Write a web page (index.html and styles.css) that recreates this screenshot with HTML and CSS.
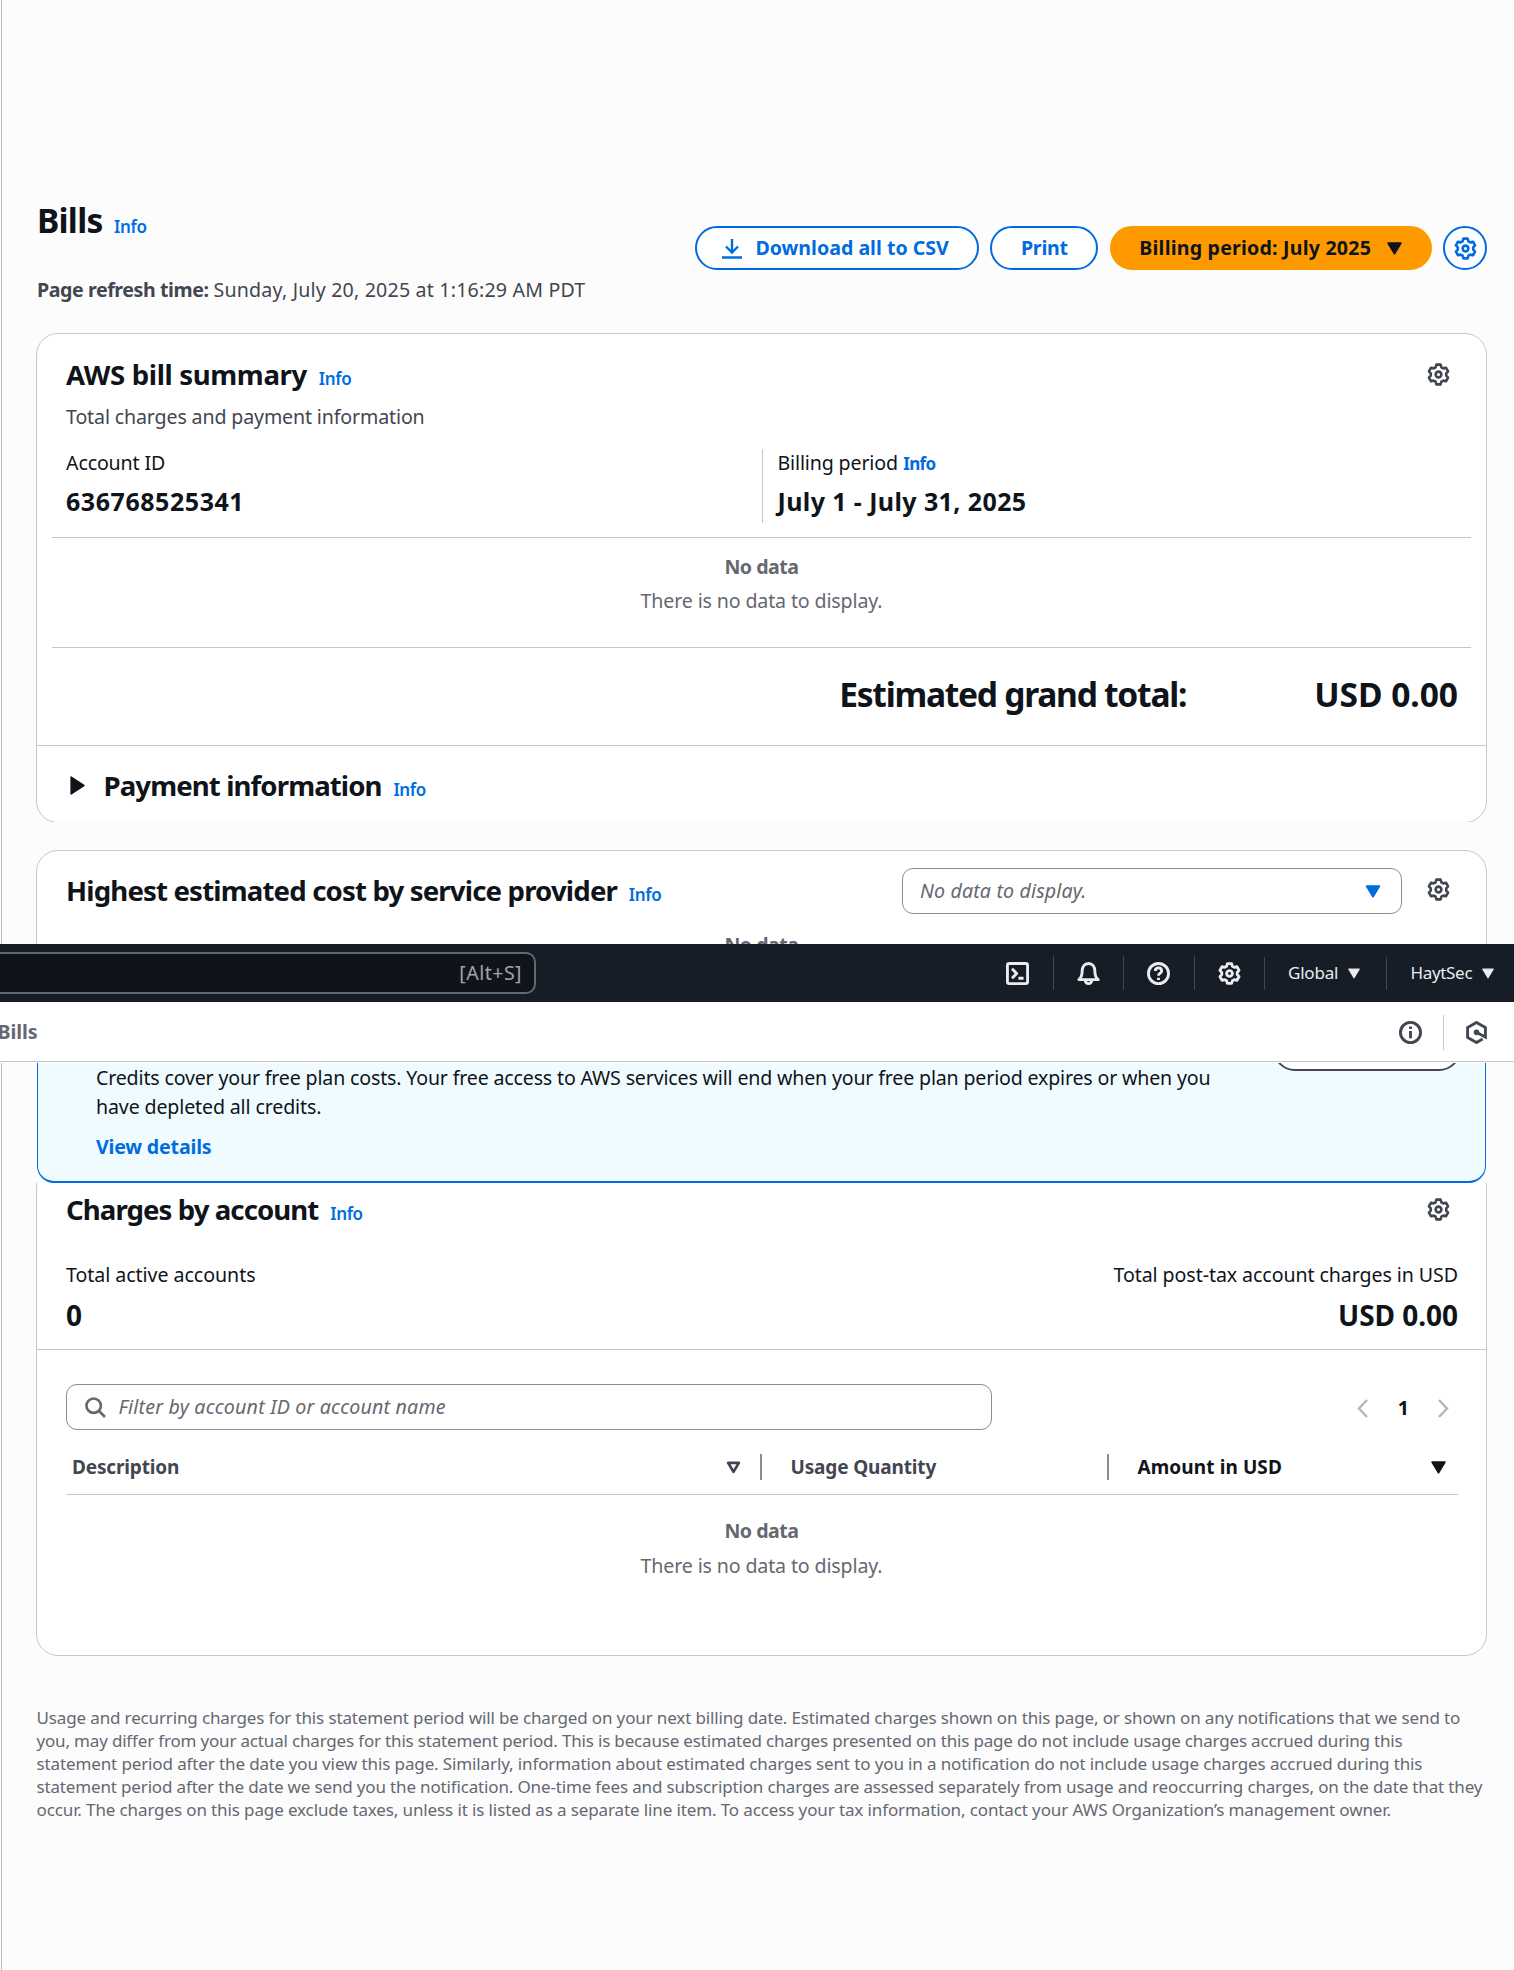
FILE: index.html
```html
<!DOCTYPE html>
<html lang="en">
<head>
<meta charset="utf-8">
<title>Bills</title>
<link rel="stylesheet" href="styles.css">
</head>
<body>
<svg class="defs" width="0" height="0" aria-hidden="true">
  <symbol id="gear" viewBox="0 0 16 16">
    <path d="M5.98 2.99 6.54 1.15H9.46L10.02 2.99 11.32 3.74 13.2 3.32 14.66 5.84 13.35 7.25V8.75L14.66 10.16 13.2 12.68 11.32 12.26 10.02 13.01 9.46 14.85H6.54L5.98 13.01 4.68 12.26 2.8 12.68 1.34 10.16 2.65 8.75V7.25L1.34 5.84 2.8 3.32 4.68 3.74Z"/>
    <circle cx="8" cy="8" r="2"/>
  </symbol>
  <symbol id="caret" viewBox="0 0 14 12">
    <path class="solid" d="M1 1H13L7 11Z"/>
  </symbol>
</svg>

<section class="pane pane-top">
  <header class="page-head">
    <div>
      <h1><span class="ls-bills">Bills</span> <a class="info">Info</a></h1>
      <p class="refresh"><b>Page refresh time:</b> <span>Sunday, July 20, 2025 at 1:16:29 AM PDT</span></p>
    </div>
    <div class="actions">
      <button class="btn btn-download"><svg class="icon-dl" viewBox="0 0 20 21"><path d="M10 1V14M4 8.5L10 14.5L16 8.5M0 19.5H20"/></svg><span>Download all to CSV</span></button>
      <button class="btn btn-print">Print</button>
      <button class="btn btn-primary"><span>Billing period: July 2025</span><svg class="caret"><use href="#caret"/></svg></button>
      <button class="btn btn-round"><svg class="gear"><use href="#gear"/></svg></button>
    </div>
  </header>

  <article class="card summary">
    <div class="card-head">
      <h2><span class="ls-aws">AWS bill summary</span> <a class="info">Info</a></h2>
      <svg class="gear"><use href="#gear"/></svg>
    </div>
    <p class="desc">Total charges and payment information</p>
    <div class="kv">
      <div><p class="label">Account ID</p><p class="value account-id">636768525341</p></div>
      <div class="split"><p class="label">Billing period <a class="info">Info</a></p><p class="value">July 1 - July 31, 2025</p></div>
    </div>
    <div class="empty boxed"><b>No data</b><p>There is no data to display.</p></div>
    <div class="grand"><span class="ls-grand">Estimated grand total:</span><span>USD 0.00</span></div>
    <div class="payment">
      <svg class="play" viewBox="0 0 14 18"><path class="solid" d="M1 1V17L13 9Z"/></svg>
      <h2><span class="ls-pay">Payment information</span> <a class="info">Info</a></h2>
    </div>
  </article>

  <article class="card provider">
    <div class="card-head">
      <h2><span class="ls-high">Highest estimated cost by service provider</span> <a class="info">Info</a></h2>
      <div class="select"><i>No data to display.</i><svg class="caret"><use href="#caret"/></svg></div>
      <svg class="gear"><use href="#gear"/></svg>
    </div>
    <div class="empty"><b>No data</b></div>
  </article>
</section>

<nav class="topnav">
  <div class="search"><span>[Alt+S]</span></div>
  <div class="cell"><svg viewBox="0 0 16 16"><rect x="1" y="1" width="14" height="14" rx="1.3"/><path d="M4.2 4.7L7.4 8L4.2 11.3M8.6 11.3H12.2"/></svg></div>
  <div class="cell sep"><svg viewBox="0 0 16 16"><path d="M1.3 12.3C3.2 10.6 3.6 9 3.6 6.2C3.6 3.2 5.2 1 8 1S12.4 3.2 12.4 6.2C12.4 9 12.8 10.6 14.7 12.3Z"/><path d="M5.7 12.6C5.8 14.2 6.7 15 8 15S10.2 14.2 10.3 12.6"/></svg></div>
  <div class="cell sep"><svg viewBox="0 0 16 16"><circle cx="8" cy="8" r="7"/><path d="M5.8 6.3C5.8 4.9 6.8 4.1 8 4.1S10.2 4.9 10.2 6.2C10.2 7.8 8 7.8 8 9.6M8 10.9V12.5"/></svg></div>
  <div class="cell sep"><svg><use href="#gear"/></svg></div>
  <div class="menu sep global"><span>Global</span><svg class="caret"><use href="#caret"/></svg></div>
  <div class="menu sep account"><span>HaytSec</span><svg class="caret"><use href="#caret"/></svg></div>
</nav>

<div class="crumbs">
  <b>Bills</b>
  <div class="crumb-tools">
    <svg viewBox="0 0 16 16"><circle cx="8" cy="8" r="7"/><path d="M8 7V12M8 3.8V5.6"/></svg>
    <span class="rule"></span>
    <svg viewBox="0 0 16 16"><path d="M12.3 12.6L8 15L1.8 11.5V4.5L8 1L14.2 4.5V11.2L8.5 8.2"/><circle class="solid" cx="8" cy="7.9" r="1.2"/></svg>
  </div>
</div>

<section class="pane pane-bottom">
  <div class="sticky">
    <aside class="alert">
      <div>
        <p class="l1">Credits cover your free plan costs. Your free access to AWS services will end when your free plan period expires or when you</p>
        <p>have depleted all credits.</p>
        <a>View details</a>
      </div>
      <span class="alert-btn"></span>
    </aside>
  </div>

  <article class="card charges">
    <div class="card-head">
      <h2><span class="ls-charges">Charges by account</span> <a class="info">Info</a></h2>
      <svg class="gear"><use href="#gear"/></svg>
    </div>
    <div class="totals">
      <div><p class="label active-accounts">Total active accounts</p><p class="big">0</p></div>
      <div class="right"><p class="label post-tax">Total post-tax account charges in USD</p><p class="big">USD 0.00</p></div>
    </div>
    <div class="tools">
      <div class="filter"><svg viewBox="0 0 16 16"><circle cx="6.6" cy="6.6" r="5.5"/><path d="M10.7 10.7L15.2 15.2"/></svg><i>Filter by account ID or account name</i></div>
      <div class="pager">
        <svg viewBox="0 0 11 19"><path d="M10 1L2 9.5L10 18"/></svg>
        <b>1</b>
        <svg viewBox="0 0 11 19"><path d="M1 1L9 9.5L1 18"/></svg>
      </div>
    </div>
    <div class="thead">
      <div class="th"><span>Description</span><svg class="hollow" viewBox="0 0 14 12"><path d="M2 1.7H12L7 10Z"/></svg></div>
      <div class="th th-split"><span>Usage Quantity</span></div>
      <div class="th th-split active"><span>Amount in USD</span><svg class="caret"><use href="#caret"/></svg></div>
    </div>
    <div class="empty"><b>No data</b><p>There is no data to display.</p></div>
  </article>

  <p class="notes"><span class="n1">Usage and recurring charges for this statement period will be charged on your next billing date. Estimated charges shown on this page, or shown on any notifications that we send to</span><br><span class="n2">you, may differ from your actual charges for this statement period. This is because estimated charges presented on this page do not include usage charges accrued during this</span><br><span class="n3">statement period after the date you view this page. Similarly, information about estimated charges sent to you in a notification do not include usage charges accrued during this</span><br>statement period after the date we send you the notification. One-time fees and subscription charges are assessed separately from usage and reoccurring charges, on the date that they<br><span class="n3">occur. The charges on this page exclude taxes, unless it is listed as a separate line item. To access your tax information, contact your AWS Organization’s management owner.</span></p>
</section>
</body>
</html>
```
FILE: styles.css
```css
* { box-sizing: border-box; }
body {
  margin: 0;
  background: #fcfcfd;
  color: #0f141a;
  font: 19.6px/28px "Noto Sans", "Open Sans", sans-serif;
  letter-spacing: -0.14px;
  white-space: nowrap;
}
h1, h2, p { margin: 0; }
b { font-weight: 700; letter-spacing: -0.5px; }
svg { display: block; flex: none; fill: none; stroke: currentColor; stroke-width: 1.8; }
.defs { position: absolute; }
.solid { fill: currentColor; stroke-linejoin: round; stroke-width: 1.5; }

.pane { margin-left: 1px; border-left: 1px solid #b9bdc4; padding: 0 27px 0 34px; overflow: hidden; }
.pane-top { height: 944px; padding-top: 200px; }
.pane-bottom { height: 907px; }

h1 { font-size: 33.6px; line-height: 40px; font-weight: 700; }
h2 { font-size: 27.6px; line-height: 40px; font-weight: 700; }
.info { color: #006ce0; font-size: 17px; line-height: 1; font-weight: 600; letter-spacing: -0.35px; margin-left: 4.8px; }
h1 .info { margin-left: 3px; }
.ls-bills { letter-spacing: -0.75px; }
.ls-aws { letter-spacing: -0.35px; }
.ls-pay { letter-spacing: -0.9px; }
.ls-high { letter-spacing: -0.84px; }
.ls-charges { letter-spacing: -0.93px; }
.ls-grand { letter-spacing: -1.27px; }

.page-head { display: flex; justify-content: space-between; height: 104px; margin-bottom: 29px; padding-left: 1px; }
.refresh { margin-top: 35px; line-height: 30px; color: #424650; }
.refresh span { letter-spacing: 0.19px; }
.refresh b { letter-spacing: -0.42px; }
.actions { display: flex; gap: 11.3px; padding-top: 26px; }
.btn {
  display: flex; align-items: center; justify-content: center;
  height: 44px; padding: 0; border: 2.5px solid #006ce0; border-radius: 22px;
  background: #fff; color: #006ce0;
  font: 700 19.6px/28px "Noto Sans", sans-serif;
}
.btn-download { width: 284px; gap: 13px; padding-right: 3px; }
.btn-print { width: 108px; letter-spacing: -0.2px; }
.btn-primary { width: 322px; gap: 16px; background: #ff9900; border-color: #ff9900; color: #0f141a; letter-spacing: 0.2px; }
.btn-round { width: 44px; }
.icon-dl { width: 20px; height: 21px; stroke-width: 2.4; }
.gear { width: 23px; height: 23px; stroke-linejoin: round; }
.caret { width: 15px; height: 13px; }

.card { border: 1px solid #c6c6cd; border-radius: 22px; background: #fff; }
.card-head { display: flex; align-items: center; padding: 0 36px 0 29px; }
.card-head h2 { flex: 1; }
.card-head .gear { color: #424650; }

.summary { height: 490px; padding-top: 20px; clip-path: inset(0 0 1px 0); }
.desc { margin: 8px 0 0 29px; line-height: 30px; color: #424650; }
.kv { display: grid; grid-template-columns: 725px 1fr; height: 74px; margin-top: 17px; }
.kv > div { padding-left: 29px; }
.kv .split { padding-left: 14.5px; border-left: 1px solid #c6c6cd; }
.kv .info { margin-left: 0.5px; font-weight: 700; letter-spacing: -0.7px; }
.value { margin-top: 8px; font-size: 25px; line-height: 32px; font-weight: 700; letter-spacing: 0.4px; }
.account-id { letter-spacing: 0.55px; }
.empty { text-align: center; color: #656871; line-height: 30px; }
.empty p { margin-top: 4px; }
.boxed { height: 111px; margin: 14px 15px 0; padding-top: 14px; border: solid #c6c6cd; border-width: 1px 0; }
.grand {
  display: flex; justify-content: flex-end; gap: 128px; height: 97px; padding: 26px 28px 0;
  font-size: 33.6px; line-height: 40px; font-weight: 700; letter-spacing: -0.05px;
}
.payment { display: flex; align-items: center; gap: 18.5px; height: 76px; padding: 3px 0 0 33px; border-top: 1px solid #c6c6cd; }
.play { width: 15px; height: 19px; margin-top: 1px; }

.provider { height: 200px; margin-top: 27px; padding-top: 17px; }
.provider h2 { padding-bottom: 2px; }
.select {
  display: flex; align-items: center; justify-content: space-between;
  width: 500px; height: 46px; margin-right: 25px; padding: 0 20px 0 17px;
  border: 1.5px solid #8c8c94; border-radius: 11px; color: #656871; letter-spacing: 0.15px;
}
.select .caret { width: 16px; height: 13px; color: #006ce0; }
.provider .gear { margin-bottom: 3px; }
.provider .empty { padding-top: 16px; }

.topnav { display: flex; align-items: center; height: 58px; background: #161d26; color: #ebebf0; font-size: 17px; letter-spacing: -0.2px; }
.search {
  width: 546px; height: 42px; margin: 0 auto 0 -10px; padding: 5px 12px; text-align: right;
  border: 2px solid #656871; border-radius: 10px; background: #0f141a;
  color: #a4a4ad; font-size: 19.6px; letter-spacing: 0.45px;
}
.cell { display: flex; justify-content: center; align-items: center; width: 70.5px; height: 34px; }
.cell svg { width: 23px; height: 23px; stroke-width: 2; stroke-linejoin: round; }
.sep { border-left: 1px solid #424650; }
.menu { display: flex; align-items: center; gap: 9.5px; height: 33px; padding-left: 23px; }
.menu .caret { width: 12px; height: 11px; }
.global { width: 122px; }
.account { width: 128px; padding-left: 23.5px; letter-spacing: -0.33px; }

.crumbs {
  position: relative; display: flex; align-items: center; justify-content: space-between;
  height: 61px; padding-bottom: 1px; background: #fff; color: #656871;
}
.crumbs::after { content: ""; position: absolute; left: 0; right: 0; bottom: 1px; height: 1px; background: #c6c6cd; }
.crumbs b { margin-left: -2.5px; letter-spacing: -0.1px; }
.crumb-tools { display: flex; align-items: center; color: #424650; padding-right: 26px; }
.crumb-tools svg { width: 23px; height: 23px; stroke-width: 2; }
.rule { width: 1px; height: 35px; margin: 0 21px; background: #c6c6cd; }

.sticky { position: relative; background: #fcfcfd; }
.alert {
  display: flex; justify-content: space-between; height: 120px;
  margin: 0 1px; padding: 1px 24px 0 58px; background: #f0fbff;
  border: solid #006ce0; border-width: 0 1px 2px; border-radius: 0 0 17px 17px;
  line-height: 28.5px;
}
.l1 { letter-spacing: -0.17px; }
.alert a { display: block; margin-top: 12px; color: #006ce0; font-weight: 700; letter-spacing: -0.18px; }
.alert-btn { width: 188px; height: 44px; margin-top: -37px; border: 2.5px solid #424650; border-radius: 22px; background: #fff; }

.charges { height: 490px; margin-top: -17px; padding-top: 22px; }
.totals { display: flex; justify-content: space-between; height: 89px; margin-top: 32px; padding: 0 28px 0 29px; border-bottom: 1px solid #c6c6cd; }
.active-accounts { letter-spacing: -0.05px; }
.post-tax { letter-spacing: -0.08px; }
.right { text-align: right; }
.big { margin-top: 8px; font-size: 28px; line-height: 36px; font-weight: 700; letter-spacing: -0.05px; }
.tools { display: flex; justify-content: space-between; align-items: center; padding: 34px 37px 0 29px; }
.filter { display: flex; align-items: center; gap: 13px; width: 926px; height: 46px; padding-left: 17.5px; border: 1.5px solid #8c8c94; border-radius: 11px; color: #656871; }
.filter svg { width: 21px; height: 21px; stroke-width: 2; }
.filter i { letter-spacing: 0.2px; }
.pager { display: flex; align-items: center; gap: 29.5px; padding-top: 2px; }
.pager svg { width: 11px; height: 19px; color: #b4b4bb; stroke-width: 2.4; }
.thead { display: grid; grid-template-columns: 694px 347px 1fr; align-items: center; height: 65px; margin: 0 28px 0 29px; padding-top: 10px; border-bottom: 1px solid #c6c6cd; color: #424650; font-size: 19px; font-weight: 700; letter-spacing: -0.15px; }
.th { display: flex; align-items: center; justify-content: space-between; height: 26px; padding: 0 19px 0 6px; }
.th-split { padding-left: 28.5px; border-left: 2px solid #8c8c94; }
.active { color: #0f141a; padding-right: 12.5px; letter-spacing: 0.1px; }
.hollow { width: 15px; height: 13px; stroke-width: 2.5; stroke-linejoin: round; }
.charges .empty { padding-top: 21px; }
.charges .empty p { margin-top: 5px; }

.notes { margin-top: 50px; padding-left: 0.5px; font-size: 17px; line-height: 23px; color: #656871; letter-spacing: -0.155px; }
.n1 { letter-spacing: -0.14px; }
.n2 { letter-spacing: -0.175px; }
.n3 { letter-spacing: -0.12px; }
```
